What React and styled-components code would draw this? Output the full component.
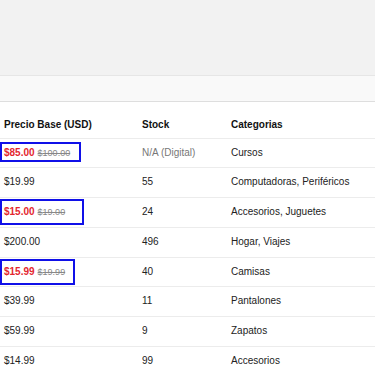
import React from 'react';
import styled, { createGlobalStyle } from 'styled-components';

const GlobalStyle = createGlobalStyle`
  html, body {
    margin: 0;
    padding: 0;
    background: #fff;
    font-family: 'Liberation Sans', Arial, sans-serif;
  }
`;

const products = [
  { price: '85.00', old: '100.00', stock: 'N/A (Digital)', digital: true, cats: 'Cursos', box: { top: 3, height: 20, width: 81 } },
  { price: '19.99', stock: '55', cats: 'Computadoras, Periféricos' },
  { price: '15.00', old: '19.00', stock: '24', cats: 'Accesorios, Juguetes', box: { top: 1, height: 26, width: 84 } },
  { price: '200.00', stock: '496', cats: 'Hogar, Viajes' },
  { price: '15.99', old: '19.99', stock: '40', cats: 'Camisas', box: { top: 1, height: 26, width: 75 } },
  { price: '39.99', stock: '11', cats: 'Pantalones' },
  { price: '59.99', stock: '9', cats: 'Zapatos' },
  { price: '14.99', stock: '99', cats: 'Accesorios' },
];

export default function App() {
  return (
    <Page>
      <GlobalStyle />
      <TopBar />
      <SubBar />
      <Table>
        <colgroup>
          <col style={{ width: 138 }} />
          <col style={{ width: 89 }} />
          <col />
        </colgroup>
        <thead>
          <tr>
            <Th>Precio Base (USD)</Th>
            <Th>Stock</Th>
            <Th>Categorias</Th>
          </tr>
        </thead>
        <tbody>
          {products.map((p, i) => (
            <tr key={i}>
              <Td>
                {p.old ? (
                  <>
                    <Sale>${p.price}</Sale>
                    <Old>${p.old}</Old>
                  </>
                ) : (
                  `$${p.price}`
                )}
                {p.box && <Highlight $top={p.box.top} $height={p.box.height} $width={p.box.width} />}
              </Td>
              <Td $muted={p.digital}>{p.stock}</Td>
              <Td>{p.cats}</Td>
            </tr>
          ))}
        </tbody>
      </Table>
    </Page>
  );
}

const Page = styled.div`
  width: 375px;
  height: 375px;
  overflow: hidden;
  background: #fff;
`;

const TopBar = styled.div`
  height: 75px;
  background: #f2f2f2;
  border-bottom: 1px solid #e6e6e6;
`;

const SubBar = styled.div`
  height: 25px;
  background: #f9f9f9;
  border-bottom: 1px solid #dedede;
`;

const Table = styled.table`
  width: 420px;
  border-collapse: collapse;
  table-layout: fixed;
  margin-top: 8px;
  font-size: 10px;
  color: #222;
`;

const Th = styled.th`
  text-align: left;
  font-weight: bold;
  color: #111;
  padding: 9px 4px 7px;
  line-height: 11.5px;
  border-bottom: 1px solid #ececec;
  white-space: nowrap;
`;

const Td = styled.td`
  position: relative;
  padding: 9px 4px;
  line-height: 10.8px;
  border-bottom: 1px solid #ececec;
  white-space: nowrap;
  color: ${p => (p.$muted ? '#777' : '#222')};
`;

const Sale = styled.span`
  color: #e3262f;
  font-weight: bold;
`;

const Old = styled.span`
  color: #888;
  font-size: 9px;
  text-decoration: line-through;
  margin-left: 3px;
`;

const Highlight = styled.div`
  position: absolute;
  left: 0;
  top: ${p => p.$top}px;
  width: ${p => p.$width}px;
  height: ${p => p.$height}px;
  box-sizing: border-box;
  border: 2px solid #1010e8;
  pointer-events: none;
`;
